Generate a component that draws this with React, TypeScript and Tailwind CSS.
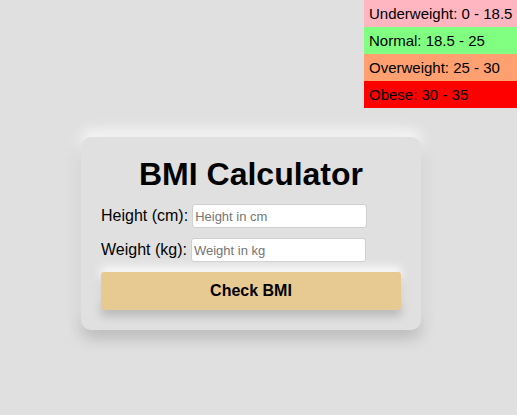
import React from "react";

export default function App() {
  return (
    <div className="relative min-h-[415px] w-full bg-[#e0e0e0] font-['Liberation_Sans',Arial,sans-serif] text-black">
      <div className="absolute right-0 top-0 w-[153px] text-[15px] leading-[27px]">
        <div className="bg-[#ffb6c1] pl-[5px]">Underweight: 0 - 18.5</div>
        <div className="bg-[#80ff80] pl-[5px]">Normal: 18.5 - 25</div>
        <div className="bg-[#ffa070] pl-[5px]">Overweight: 25 - 30</div>
        <div className="bg-[#ff0000] pl-[5px]">Obese: 30 - 35</div>
      </div>
      <div className="pl-[81px] pt-[137px]">
        <div className="w-[340px] rounded-[10px] bg-[#e0e0e0] px-[20px] pb-[20px] pt-[17px] shadow-[0_8px_16px_rgba(0,0,0,0.18),0_-6px_14px_rgba(255,255,255,0.9)]">
          <h1 className="mb-[10px] text-center text-[32px] font-bold leading-[40px]">BMI Calculator</h1>
          <div className="flex items-center gap-[4px] text-[16px]">
            <span>Height (cm):</span>
            <input
              className="h-[24px] w-[175px] rounded-[3px] border border-[#cfcfcf] bg-white px-[2px] text-[13px] placeholder:text-[#757575] outline-none"
              placeholder="Height in cm"
            />
          </div>
          <div className="mt-[10px] flex items-center gap-[4px] text-[16px]">
            <span>Weight (kg):</span>
            <input
              className="h-[24px] w-[175px] rounded-[3px] border border-[#cfcfcf] bg-white px-[2px] text-[13px] placeholder:text-[#757575] outline-none"
              placeholder="Weight in kg"
            />
          </div>
          <button className="mt-[10px] h-[38px] w-[300px] rounded-[3px] bg-[#e6ca92] text-[16px] font-bold shadow-[0_6px_10px_rgba(0,0,0,0.18),0_-5px_10px_rgba(255,255,255,0.9)]">
            Check BMI
          </button>
        </div>
      </div>
    </div>
  );
}
